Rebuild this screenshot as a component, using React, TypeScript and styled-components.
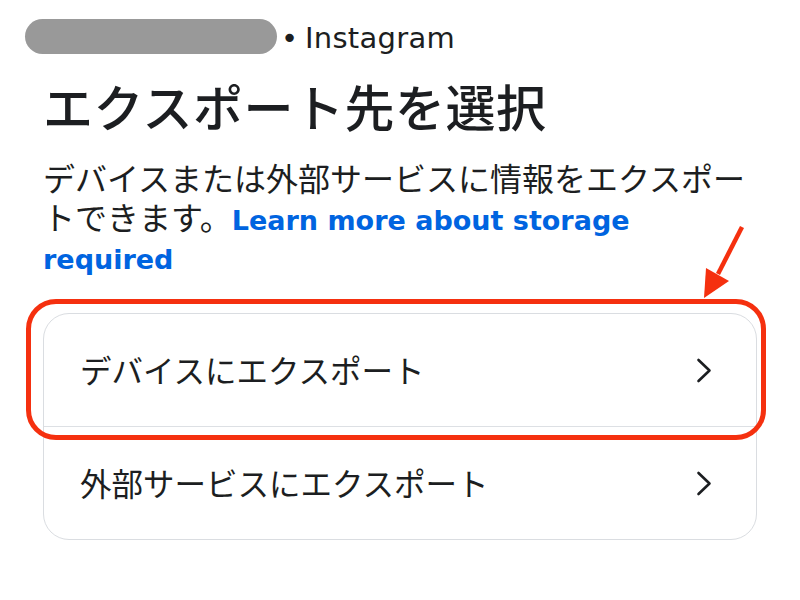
import React from "react";
import styled, { createGlobalStyle } from "styled-components";

const GlobalStyle = createGlobalStyle`
  html, body {
    margin: 0;
    padding: 0;
    background: #ffffff;
  }
  body {
    font-family: "Noto Sans CJK JP", "Noto Sans", sans-serif;
    color: #1c1e21;
  }
`;

const Page = styled.div`
  width: 800px;
  height: 600px;
  box-sizing: border-box;
  padding: 19px 0 0 25px;
  overflow: hidden;
  position: relative;
`;

const Header = styled.div`
  display: flex;
  align-items: center;
  height: 35px;
`;

const BlurredName = styled.div`
  width: 252px;
  height: 35px;
  border-radius: 18px;
  background: #999999;
`;

const Source = styled.span`
  margin-left: 4px;
  font-family: "DejaVu Sans", sans-serif;
  font-size: 29px;
  line-height: 35px;
  color: #1c1e21;
  padding-top: 4px;
  word-spacing: -3px;
  letter-spacing: 0.3px;
`;

const Content = styled.div`
  padding-left: 18px;
  width: 714px;
`;

const Title = styled.h1`
  margin: 21px 0 0 0;
  font-family: "Noto Sans CJK JP", sans-serif;
  font-size: 50px;
  font-weight: 500;
  line-height: 60px;
  letter-spacing: 0.5px;
  color: #1c1e21;
`;

const Description = styled.p`
  margin: 23px 0 0 0;
  font-family: "Noto Sans CJK JP", sans-serif;
  font-size: 32px;
  font-weight: 400;
  line-height: 39px;
  color: #1c1e21;
`;

const LearnLink = styled.a`
  font-family: "DejaVu Sans", sans-serif;
  font-weight: 700;
  font-size: 27px;
  line-height: 1;
  color: #0064e0;
  text-decoration: none;
`;

const Card = styled.div`
  position: relative;
  margin-top: 38px;
  border: 1.5px solid #dadde1;
  border-radius: 26px;
  display: flex;
  flex-direction: column;
`;

const Row = styled.div<{ $divider?: boolean }>`
  height: 112px;
  display: flex;
  align-items: center;
  justify-content: space-between;
  padding: 0 44px 0 36px;
  border-top: ${(p) => (p.$divider ? "1.5px solid #dde0e4" : "none")};
  font-family: "Noto Sans CJK JP", sans-serif;
  font-size: 31.5px;
  color: #1c1e21;
`;

const RowLabel = styled.span`
  margin-top: -3px;
`;

const Highlight = styled.div`
  position: absolute;
  top: -15px;
  left: -18px;
  right: -10px;
  height: 141px;
  box-sizing: border-box;
  border: 5px solid #f5300f;
  border-radius: 30px;
  pointer-events: none;
`;

const Arrow = styled.svg`
  position: absolute;
  top: -90px;
  right: -10px;
  width: 70px;
  height: 90px;
  overflow: visible;
`;

const Chevron = () => (
  <svg width="16" height="25" viewBox="0 0 16 25" fill="none">
    <path
      d="M2.5 2 L13.5 12.5 L2.5 23"
      stroke="#1c1e21"
      strokeWidth="2.6"
      strokeLinecap="round"
      strokeLinejoin="round"
    />
  </svg>
);

export default function App() {
  return (
    <>
      <GlobalStyle />
      <Page>
        <Header>
          <BlurredName />
          <Source>• Instagram</Source>
        </Header>
        <Content>
          <Title>エクスポート先を選択</Title>
          <Description>
            デバイスまたは外部サービスに情報をエクスポートできます。
            <LearnLink href="#">Learn more about storage required</LearnLink>
          </Description>
          <Card>
            <Row>
              <RowLabel>デバイスにエクスポート</RowLabel>
              <Chevron />
            </Row>
            <Row $divider>
              <RowLabel>外部サービスにエクスポート</RowLabel>
              <Chevron />
            </Row>
            <Highlight />
            <Arrow viewBox="0 0 70 90">
              <line x1="46" y1="3" x2="22" y2="50" stroke="#f5300f" strokeWidth="4.5" />
              <polygon points="8,74 10,44 33,57" fill="#f5300f" />
            </Arrow>
          </Card>
        </Content>
      </Page>
    </>
  );
}
